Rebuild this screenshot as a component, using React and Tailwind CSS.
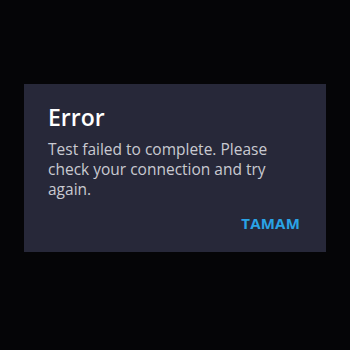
export default function App() {
  return (
    <div className="w-[350px] h-[350px] bg-[#050507] flex justify-center pt-[84px]" style={{ fontFamily: '"Open Sans", "DejaVu Sans", sans-serif' }}>
      <div className="w-[302px] h-[168px] bg-[#272839] pt-[18px] pl-[24px] pr-[26px] flex flex-col">
        <h2 className="text-[23px] leading-[30px] font-semibold text-white">Error</h2>
        <p className="mt-[7px] text-[15.5px] leading-[20px] text-[#c9cad1]">
          Test failed to complete. Please check your connection and try again.
        </p>
        <div className="mt-[13px] flex justify-end">
          <button className="text-[15px] font-bold text-[#2aa3e6] tracking-[0.2px]">TAMAM</button>
        </div>
      </div>
    </div>
  );
}
